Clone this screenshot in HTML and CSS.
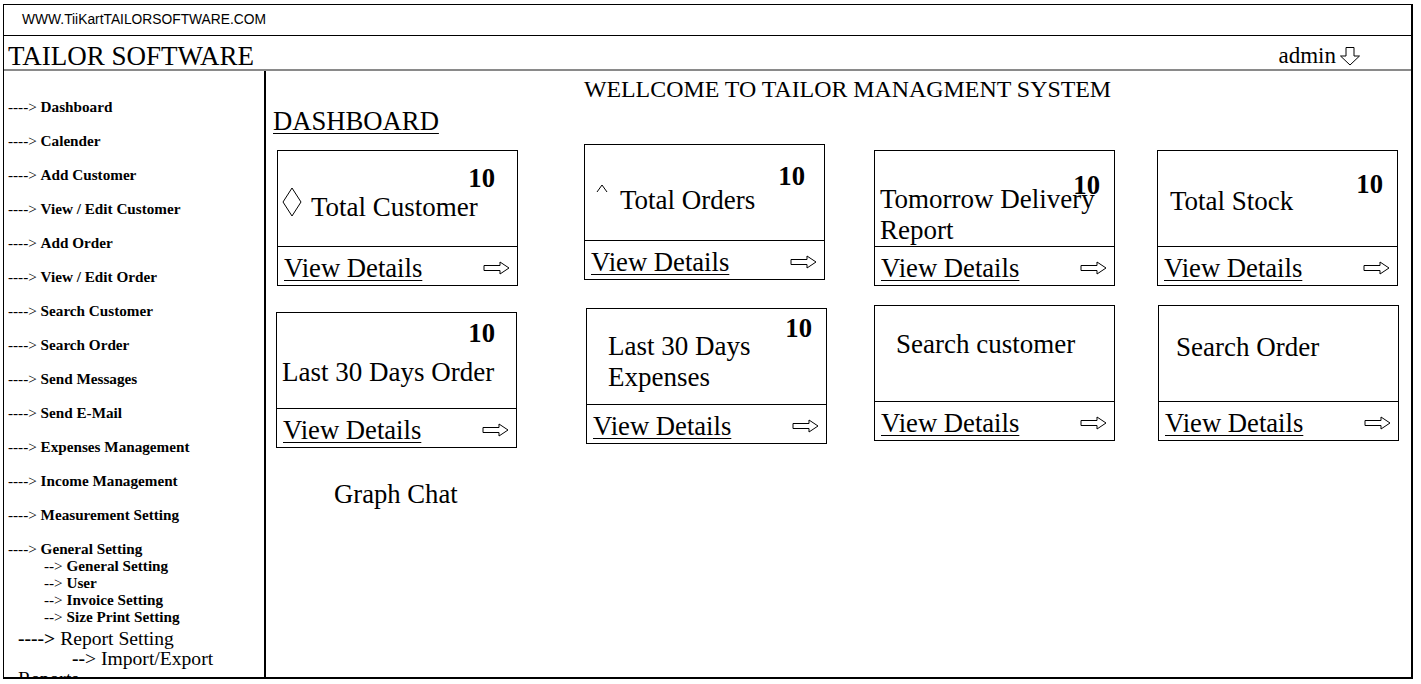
FILE: index.html
```html
<!DOCTYPE html>
<html>
<head>
<meta charset="utf-8">
<title>Tailor Software</title>
<link rel="stylesheet" href="styles.css">
</head>
<body>
<div class="frame">
  <div class="topbar">WWW.TiiKartTAILORSOFTWARE.COM</div>
  <div class="titlebar">
    <span class="brand">TAILOR SOFTWARE</span>
    <span class="user">admin<svg class="user-arrow" width="22" height="20" viewBox="0 0 22 20"><path d="M7 1.5 H15 V10 H20.5 L11 19 L1.5 10 H7 Z" fill="#fff" stroke="#000" stroke-width="1"/></svg></span>
  </div>
  <div class="body">
    <nav class="sidebar">
      <div class="nav-item"><span class="dash">----&gt;</span> <b>Dashboard</b></div>
      <div class="nav-item"><span class="dash">----&gt;</span> <b>Calender</b></div>
      <div class="nav-item"><span class="dash">----&gt;</span> <b>Add Customer</b></div>
      <div class="nav-item"><span class="dash">----&gt;</span> <b>View / Edit Customer</b></div>
      <div class="nav-item"><span class="dash">----&gt;</span> <b>Add Order</b></div>
      <div class="nav-item"><span class="dash">----&gt;</span> <b>View / Edit Order</b></div>
      <div class="nav-item"><span class="dash">----&gt;</span> <b>Search Customer</b></div>
      <div class="nav-item"><span class="dash">----&gt;</span> <b>Search Order</b></div>
      <div class="nav-item"><span class="dash">----&gt;</span> <b>Send Messages</b></div>
      <div class="nav-item"><span class="dash">----&gt;</span> <b>Send E-Mail</b></div>
      <div class="nav-item"><span class="dash">----&gt;</span> <b>Expenses Management</b></div>
      <div class="nav-item"><span class="dash">----&gt;</span> <b>Income Management</b></div>
      <div class="nav-item"><span class="dash">----&gt;</span> <b>Measurement Setting</b></div>
      <div class="nav-item nav-group"><span class="dash">----&gt;</span> <b>General Setting</b></div>
      <div class="nav-sub"><span class="dash">--&gt;</span> <b>General Setting</b></div>
      <div class="nav-sub"><span class="dash">--&gt;</span> <b>User</b></div>
      <div class="nav-sub"><span class="dash">--&gt;</span> <b>Invoice Setting</b></div>
      <div class="nav-sub"><span class="dash">--&gt;</span> <b>Size Print Setting</b></div>
      <div class="nav-big"><b>----&gt;</b> Report Setting</div>
      <div class="nav-big nav-big-sub"><b>--</b>&gt; Import/Export</div>
      <div class="nav-big">Reports</div>
    </nav>
    <main class="main">
      <h1 class="welcome">WELLCOME TO TAILOR MANAGMENT SYSTEM</h1>
      <h2 class="page-title">DASHBOARD</h2>

      <div class="card-row row-1">
        <div class="card c1">
          <div class="card-body">
            <span class="num n1">10</span>
            <div class="title t1"><svg class="diamond" width="20" height="30" viewBox="0 0 20 30"><path d="M10 1 L19 15 L10 29 L1 15 Z" fill="none" stroke="#000" stroke-width="1"/></svg>Total Customer</div>
          </div>
          <div class="card-foot"><span class="link">View Details</span><svg class="go" width="27" height="14" viewBox="0 0 27 14"><path d="M1 4.5 H17 V1 L26 7 L17 13 V9.5 H1 Z" fill="#fff" stroke="#000" stroke-width="1"/></svg></div>
        </div>
        <div class="card c2">
          <div class="card-body">
            <span class="num n2">10</span>
            <div class="title t2"><svg class="caret" width="12" height="10" viewBox="0 0 12 10"><path d="M1 9 L6 2 L11 9" fill="none" stroke="#000" stroke-width="1"/></svg>Total Orders</div>
          </div>
          <div class="card-foot"><span class="link">View Details</span><svg class="go" width="27" height="14" viewBox="0 0 27 14"><path d="M1 4.5 H17 V1 L26 7 L17 13 V9.5 H1 Z" fill="#fff" stroke="#000" stroke-width="1"/></svg></div>
        </div>
        <div class="card c3">
          <div class="card-body">
            <span class="num n3">10</span>
            <div class="title t3">Tomorrow Delivery Report</div>
          </div>
          <div class="card-foot"><span class="link">View Details</span><svg class="go" width="27" height="14" viewBox="0 0 27 14"><path d="M1 4.5 H17 V1 L26 7 L17 13 V9.5 H1 Z" fill="#fff" stroke="#000" stroke-width="1"/></svg></div>
        </div>
        <div class="card c4">
          <div class="card-body">
            <span class="num n4">10</span>
            <div class="title t4">Total Stock</div>
          </div>
          <div class="card-foot"><span class="link">View Details</span><svg class="go" width="27" height="14" viewBox="0 0 27 14"><path d="M1 4.5 H17 V1 L26 7 L17 13 V9.5 H1 Z" fill="#fff" stroke="#000" stroke-width="1"/></svg></div>
        </div>
      </div>

      <div class="card-row row-2">
        <div class="card c5">
          <div class="card-body">
            <span class="num n5">10</span>
            <div class="title t5">Last 30 Days Order</div>
          </div>
          <div class="card-foot"><span class="link">View Details</span><svg class="go" width="27" height="14" viewBox="0 0 27 14"><path d="M1 4.5 H17 V1 L26 7 L17 13 V9.5 H1 Z" fill="#fff" stroke="#000" stroke-width="1"/></svg></div>
        </div>
        <div class="card c6">
          <div class="card-body">
            <span class="num n6">10</span>
            <div class="title t6">Last 30 Days Expenses</div>
          </div>
          <div class="card-foot"><span class="link">View Details</span><svg class="go" width="27" height="14" viewBox="0 0 27 14"><path d="M1 4.5 H17 V1 L26 7 L17 13 V9.5 H1 Z" fill="#fff" stroke="#000" stroke-width="1"/></svg></div>
        </div>
        <div class="card c7">
          <div class="card-body">
            <div class="title t7">Search customer</div>
          </div>
          <div class="card-foot"><span class="link">View Details</span><svg class="go" width="27" height="14" viewBox="0 0 27 14"><path d="M1 4.5 H17 V1 L26 7 L17 13 V9.5 H1 Z" fill="#fff" stroke="#000" stroke-width="1"/></svg></div>
        </div>
        <div class="card c8">
          <div class="card-body">
            <div class="title t8">Search Order</div>
          </div>
          <div class="card-foot"><span class="link">View Details</span><svg class="go" width="27" height="14" viewBox="0 0 27 14"><path d="M1 4.5 H17 V1 L26 7 L17 13 V9.5 H1 Z" fill="#fff" stroke="#000" stroke-width="1"/></svg></div>
        </div>
      </div>

      <div class="graph">Graph Chat</div>
    </main>
  </div>
</div>
</body>
</html>
```
FILE: styles.css
```css
* { box-sizing: border-box; }
html, body { margin: 0; padding: 0; background: #fff; }
body {
  font-family: "Liberation Serif", "Times New Roman", serif;
  color: #000;
}
.frame {
  margin: 4px 0 0 3px;
  width: 1410px;
  height: 675px;
  border-style: solid;
  border-color: #000;
  border-width: 1px 2px 2px 1px;
  display: flex;
  flex-direction: column;
  overflow: hidden;
}
.topbar {
  height: 31px;
  border-bottom: 1px solid #000;
  font-family: "Liberation Sans", Arial, sans-serif;
  font-size: 13.8px;
  line-height: 30px;
  padding-left: 18px;
  flex: none;
}
.titlebar {
  height: 35px;
  border-bottom: 2px solid #8a8a8a;
  padding: 7px 50px 0 4px;
  display: flex;
  align-items: flex-start;
  flex: none;
}
.brand {
  font-size: 27px;
  line-height: 26px;
}
.user {
  margin-left: auto;
  font-size: 23px;
  line-height: 26px;
  display: flex;
  align-items: center;
}
.user-arrow { margin-left: 3px; }
.body {
  flex: 1;
  display: flex;
  min-height: 0;
}
.sidebar {
  width: 262px;
  flex: none;
  border-right: 2px solid #000;
  padding: 27px 0 0 4px;
  overflow: hidden;
  display: flex;
  flex-direction: column;
}
.nav-item {
  font-size: 15.2px;
  line-height: 17px;
  height: 17px;
  margin-bottom: 17px;
  white-space: nowrap;
  flex: none;
}
.nav-item.nav-group { margin-bottom: 0; }
.nav-sub {
  font-size: 15.2px;
  line-height: 17px;
  height: 17px;
  padding-left: 36px;
  white-space: nowrap;
  flex: none;
}
.dash { font-weight: normal; }
.nav-big {
  font-size: 19.6px;
  line-height: 20px;
  height: 20px;
  padding-left: 10px;
  white-space: nowrap;
  flex: none;
}
.nav-sub + .nav-big { margin-top: 4px; }
.nav-big-sub { padding-left: 64px; }
.main {
  flex: 1;
  min-width: 0;
  padding-top: 4px;
}
.welcome {
  margin: 0;
  font-weight: normal;
  font-size: 23.9px;
  line-height: 28px;
  text-align: center;
  padding-left: 18px;
}
.page-title {
  margin: 3px 0 0 7px;
  font-weight: normal;
  font-size: 26.67px;
  line-height: 30px;
  text-decoration: underline;
  text-decoration-thickness: 1px;
  text-underline-offset: 3px;
}
.card-row {
  display: flex;
  align-items: flex-start;
}
.row-1 { margin-top: 8px; height: 142px; }
.row-2 { margin-top: 19px; }
.card {
  width: 241px;
  height: 136px;
  border: 1px solid #000;
  display: flex;
  flex-direction: column;
  flex: none;
}
.c1 { margin-left: 11px; margin-top: 6px; }
.c2 { margin-left: 66px; }
.c3 { margin-left: 49px; margin-top: 6px; }
.c4 { margin-left: 42px; margin-top: 6px; }
.c5 { margin-left: 10px; margin-top: 7px; }
.c6 { margin-left: 69px; margin-top: 3px; }
.c7 { margin-left: 47px; }
.c8 { margin-left: 43px; }
.card-body {
  position: relative;
  height: 96px;
  border-bottom: 1px solid #000;
  flex: none;
}
.num {
  position: absolute;
  font-weight: bold;
  font-size: 26.67px;
  line-height: 30px;
}
.n1 { top: 12px; right: 22px; }
.n2 { top: 16px; right: 19px; }
.n3 { top: 19px; right: 14px; }
.n4 { top: 18px; right: 14px; }
.n5 { top: 5px; right: 21px; }
.n6 { top: 4px; right: 14px; }
.title {
  font-size: 27px;
  line-height: 31px;
}
.t1 { padding: 41px 0 0 4px; display: flex; align-items: flex-start; line-height: 30px; }
.diamond { margin: -5px 9px 0 0; flex: none; }
.t2 { padding: 40px 0 0 11px; display: flex; align-items: flex-start; line-height: 30px; }
.caret { margin: -2px 12px 0 0; flex: none; }
.t3 { padding: 33px 0 0 5px; }
.t4 { padding: 35px 0 0 12px; line-height: 30px; }
.t5 { padding: 44px 0 0 5px; line-height: 30px; }
.t6 { padding: 22px 0 0 21px; }
.t7 { padding: 23px 0 0 21px; line-height: 30px; }
.t8 { padding: 26px 0 0 17px; line-height: 30px; }
.card-foot {
  flex: 1;
  display: flex;
  align-items: center;
  justify-content: space-between;
  padding: 3px 7px 0 6px;
}
.link {
  font-size: 26.67px;
  line-height: 30px;
  text-decoration: underline;
  text-decoration-thickness: 1px;
  text-underline-offset: 3px;
}
.go { flex: none; margin-top: 1px; }
.graph {
  margin: 31px 0 0 68px;
  font-size: 26.67px;
  line-height: 30px;
}
```
